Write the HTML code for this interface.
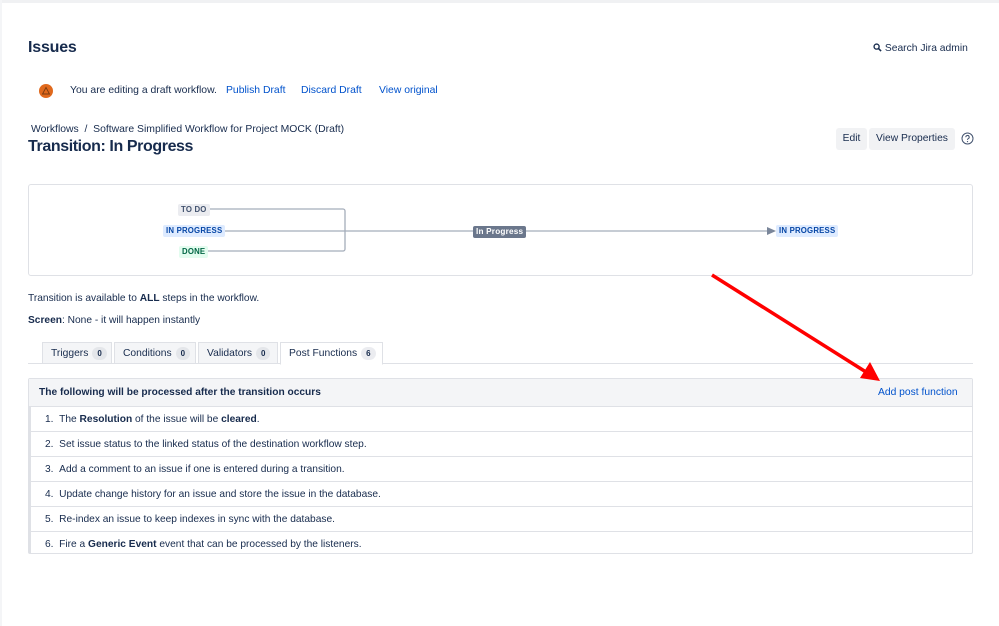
<!DOCTYPE html>
<html><head><meta charset="utf-8"><style>
*{margin:0;padding:0;box-sizing:border-box}
body{width:999px;height:626px;background:#fff;font-family:"Liberation Sans",sans-serif;color:#172b4d;position:relative;overflow:hidden;font-size:10.2px}
.a{position:absolute;white-space:nowrap}
.link{color:#0052cc}
.btn{position:absolute;background:#f1f2f4;border-radius:3px;height:22px;line-height:22px;text-align:center;font-size:10.3px;color:#172b4d}
.lz{position:absolute;font-size:7.8px;font-weight:bold;padding:1px 3px;border-radius:2px;line-height:10px;letter-spacing:.2px}
.tab{position:absolute;top:342px;height:22px;border:1px solid #dfe1e6;background:#f4f5f7;line-height:21px;padding-left:8px;font-size:10.3px}
.tab .c{display:inline-block;background:#e4e6ea;border-radius:8px;padding:0 5px;font-size:8px;font-weight:bold;line-height:13px;margin-left:4px}
.row{position:absolute;left:28px;width:945px;height:25px;border-top:1px solid #dfe1e6;line-height:25px;padding-left:17px}
</style></head><body>
<div class="a" style="left:0;top:0;width:999px;height:3px;background:#f0f1f3"></div>
<div class="a" style="left:0;top:0;width:2px;height:626px;background:#f4f5f7"></div>
<div class="a" style="left:28px;top:39px;font-size:16px;font-weight:bold;letter-spacing:-.2px">Issues</div>
<div class="a" style="left:873px;top:43px;font-size:10.3px"><svg width="9" height="9" viewBox="0 0 10 10" style="vertical-align:-1px"><circle cx="4" cy="4" r="2.8" fill="none" stroke="#172b4d" stroke-width="1.5"/><path d="M6 6l3 3" stroke="#172b4d" stroke-width="1.7"/></svg> Search Jira admin</div>
<div class="a" style="left:39px;top:84px;width:14px;height:14px;border-radius:50%;background:#e0691d"></div>
<svg class="a" style="left:41px;top:86px" width="10" height="10" viewBox="0 0 10 10"><path d="M5 1.5L8.5 8H1.5z" fill="none" stroke="#7a3a10" stroke-width=".9"/></svg>
<div class="a" style="left:70px;top:85px;font-size:10.4px">You are editing a draft workflow.</div>
<div class="a link" style="left:226px;top:85px;font-size:10.4px">Publish Draft</div>
<div class="a link" style="left:301px;top:85px;font-size:10.4px">Discard Draft</div>
<div class="a link" style="left:379px;top:85px;font-size:10.4px">View original</div>
<div class="a" style="left:31px;top:124px;font-size:10.4px">Workflows &nbsp;/ &nbsp;Software Simplified Workflow for Project MOCK (Draft)</div>
<div class="a" style="left:28px;top:138px;font-size:16px;font-weight:bold;letter-spacing:-.4px">Transition: In Progress</div>
<div class="btn" style="left:836px;top:128px;width:31px">Edit</div>
<div class="btn" style="left:869px;top:128px;width:86px">View Properties</div>
<svg class="a" style="left:961px;top:132px" width="13" height="13" viewBox="0 0 13 13"><circle cx="6.5" cy="6.5" r="5.5" fill="none" stroke="#42526e" stroke-width="1"/><path d="M4.8 5.2a1.7 1.7 0 1 1 2.4 1.5c-.6.3-.7.6-.7 1.2" fill="none" stroke="#42526e" stroke-width="1"/><circle cx="6.5" cy="9.6" r=".6" fill="#42526e"/></svg>
<div class="a" style="left:28px;top:184px;width:945px;height:92px;border:1px solid #dfe1e6;border-radius:3px"></div>
<svg class="a" style="left:0;top:0" width="999" height="300"><g stroke="#a5adba" stroke-width="1.3" fill="none"><path d="M205 209H343a2 2 0 0 1 2 2V249a2 2 0 0 1-2 2H205"/><path d="M225 231H768"/></g><path d="M767 227l9 4-9 4z" fill="#7a869a"/></svg>
<div class="lz" style="left:178px;top:204px;background:#ebecf0;color:#42526e">TO DO</div>
<div class="lz" style="left:163px;top:225px;background:#deebff;color:#0747a6">IN PROGRESS</div>
<div class="lz" style="left:179px;top:246px;background:#e3fcef;color:#006644">DONE</div>
<div class="lz" style="left:473px;top:226px;background:#6b778c;color:#fff;font-size:8.2px">In Progress</div>
<div class="lz" style="left:776px;top:225px;background:#deebff;color:#0747a6">IN PROGRESS</div>
<div class="a" style="left:28px;top:293px">Transition is available to <b>ALL</b> steps in the workflow.</div>
<div class="a" style="left:28px;top:315px"><b>Screen</b>: None - it will happen instantly</div>
<div class="a" style="left:28px;top:363px;width:945px;height:1px;background:#dfe1e6"></div>
<div class="tab" style="left:42px;width:70px">Triggers<span class="c">0</span></div>
<div class="tab" style="left:114px;width:82px">Conditions<span class="c">0</span></div>
<div class="tab" style="left:198px;width:80px">Validators<span class="c">0</span></div>
<div class="tab" style="left:280px;width:103px;background:#fff;border-bottom-color:#fff;height:23px">Post Functions<span class="c" style="background:#ebecf0">6</span></div>
<div class="a" style="left:28px;top:378px;width:945px;height:176px;border:1px solid #dfe1e6;border-left:3px solid #dfe1e6;border-radius:2px"></div>
<div class="a" style="left:29px;top:379px;width:943px;height:27px;background:#f4f5f7"></div>
<div class="a" style="left:39px;top:387px;font-weight:bold;font-size:10.2px">The following will be processed after the transition occurs</div>
<div class="a link" style="left:878px;top:387px;font-size:10.3px">Add post function</div>
<div class="row" style="top:406px">1.&nbsp;&nbsp;The <b>Resolution</b> of the issue will be <b>cleared</b>.</div>
<div class="row" style="top:431px">2.&nbsp;&nbsp;Set issue status to the linked status of the destination workflow step.</div>
<div class="row" style="top:456px">3.&nbsp;&nbsp;Add a comment to an issue if one is entered during a transition.</div>
<div class="row" style="top:481px">4.&nbsp;&nbsp;Update change history for an issue and store the issue in the database.</div>
<div class="row" style="top:506px">5.&nbsp;&nbsp;Re-index an issue to keep indexes in sync with the database.</div>
<div class="row" style="top:531px">6.&nbsp;&nbsp;Fire a <b>Generic Event</b> event that can be processed by the listeners.</div>
<svg class="a" style="left:0;top:0" width="999" height="626"><path d="M712 275L866 372" stroke="#f00" stroke-width="3.5"/><path d="M880 381L860 378L870 362z" fill="#f00"/></svg>
</body></html>
